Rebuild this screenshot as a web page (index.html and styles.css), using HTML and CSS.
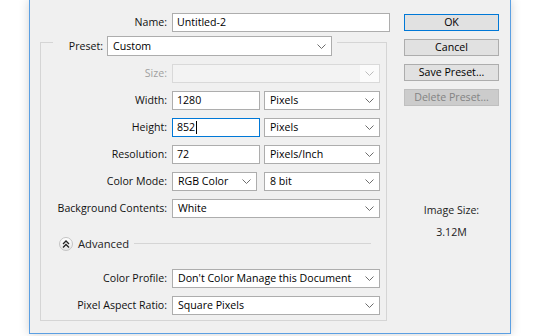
FILE: index.html
```html
<!DOCTYPE html>
<html lang="en">
<head>
    <meta charset="UTF-8">
    <title>New</title>
    <link rel="stylesheet" href="styles.css">
</head>
<body>

    <div class="window">
        <div class="main">
            <div class="name-row">
                <label class="label">Name:</label>
                <div class="input">Untitled-2</div>
            </div>

            <div class="group">
                <div class="group-head">
                    <label class="label preset-label">Preset:</label>
                    <div class="select preset-select">
                        <span>Custom</span>
                        <svg class="chev" width="9" height="5" viewBox="0 0 9 5"><polyline points="0.5,0.5 4.5,4.5 8.5,0.5"/></svg>
                    </div>
                </div>

                <div class="rows">
                    <label class="label disabled">Size:</label>
                    <div class="select is-disabled">
                        <span></span>
                        <svg class="chev" width="9" height="5" viewBox="0 0 9 5"><polyline points="0.5,0.5 4.5,4.5 8.5,0.5"/></svg>
                    </div>

                    <label class="label">Width:</label>
                    <div class="pair">
                        <div class="input num">1280</div>
                        <div class="select unit">
                            <span>Pixels</span>
                            <svg class="chev" width="9" height="5" viewBox="0 0 9 5"><polyline points="0.5,0.5 4.5,4.5 8.5,0.5"/></svg>
                        </div>
                    </div>

                    <label class="label">Height:</label>
                    <div class="pair">
                        <div class="input num focused">852<i class="caret"></i></div>
                        <div class="select unit">
                            <span>Pixels</span>
                            <svg class="chev" width="9" height="5" viewBox="0 0 9 5"><polyline points="0.5,0.5 4.5,4.5 8.5,0.5"/></svg>
                        </div>
                    </div>

                    <label class="label">Resolution:</label>
                    <div class="pair">
                        <div class="input num">72</div>
                        <div class="select unit">
                            <span>Pixels/Inch</span>
                            <svg class="chev" width="9" height="5" viewBox="0 0 9 5"><polyline points="0.5,0.5 4.5,4.5 8.5,0.5"/></svg>
                        </div>
                    </div>

                    <label class="label">Color Mode:</label>
                    <div class="pair">
                        <div class="select mode">
                            <span>RGB Color</span>
                            <svg class="chev" width="9" height="5" viewBox="0 0 9 5"><polyline points="0.5,0.5 4.5,4.5 8.5,0.5"/></svg>
                        </div>
                        <div class="select unit">
                            <span>8 bit</span>
                            <svg class="chev" width="9" height="5" viewBox="0 0 9 5"><polyline points="0.5,0.5 4.5,4.5 8.5,0.5"/></svg>
                        </div>
                    </div>

                    <label class="label">Background Contents:</label>
                    <div class="select">
                        <span>White</span>
                        <svg class="chev" width="9" height="5" viewBox="0 0 9 5"><polyline points="0.5,0.5 4.5,4.5 8.5,0.5"/></svg>
                    </div>

                    <div class="advanced">
                        <span class="adv-toggle">
                            <svg width="8" height="8" viewBox="0 0 8 8"><polyline points="1,4 4,1 7,4"/><polyline points="1,7.5 4,4.5 7,7.5"/></svg>
                        </span>
                        <span class="adv-text">Advanced</span>
                        <span class="adv-line"></span>
                    </div>

                    <label class="label">Color Profile:</label>
                    <div class="select">
                        <span>Don't Color Manage this Document</span>
                        <svg class="chev" width="9" height="5" viewBox="0 0 9 5"><polyline points="0.5,0.5 4.5,4.5 8.5,0.5"/></svg>
                    </div>

                    <label class="label">Pixel Aspect Ratio:</label>
                    <div class="select">
                        <span>Square Pixels</span>
                        <svg class="chev" width="9" height="5" viewBox="0 0 9 5"><polyline points="0.5,0.5 4.5,4.5 8.5,0.5"/></svg>
                    </div>
                </div>
            </div>
        </div>

        <div class="side">
            <button class="btn default">OK</button>
            <button class="btn">Cancel</button>
            <button class="btn">Save Preset...</button>
            <button class="btn" disabled>Delete Preset...</button>

            <div class="image-size">
                <p>Image Size:</p>
                <p>3.12M</p>
            </div>
        </div>
    </div>

</body>
</html>
```

FILE: styles.css
```css
body {
    margin: 0;
    padding: 0;
    height: 336px;
    overflow: hidden;
    background-color: #fff;
    font-family: 'Open Sans', 'Noto Sans', sans-serif;
    font-size: 10.6px;
    color: #000;
}

.window {
    display: flex;
    box-sizing: border-box;
    width: 482px;
    height: 334px;
    margin-left: 29px;
    padding-top: 13px;
    background-color: #f0f0f0;
    border: 1px solid #5b9fe2;
    border-top: none;
    box-shadow: 0 0 10px rgba(0, 0, 0, 0.18);
}

.main {
    width: 360px;
}

.label {
    text-align: right;
    line-height: 19px;
    white-space: nowrap;
    color: #111;
}

.label.disabled {
    color: #a0a0a0;
}

.name-row {
    display: grid;
    grid-template-columns: 137px 218px;
    column-gap: 5px;
}

.input,
.select {
    box-sizing: border-box;
    height: 19px;
    line-height: 17px;
    background-color: #fff;
    border: 1px solid #adadad;
    white-space: nowrap;
}

.input {
    padding-left: 4px;
}

.input.focused {
    border-color: #0078d7;
}

.caret {
    display: inline-block;
    width: 1px;
    height: 13px;
    margin-left: 1px;
    vertical-align: -3px;
    background-color: #000;
}

.select {
    display: flex;
    align-items: center;
    justify-content: space-between;
    padding: 0 5px 0 5px;
}

.chev {
    flex: none;
    fill: none;
    stroke: #6d6d6d;
    stroke-width: 1;
}

.select.is-disabled {
    background-color: #f3f3f3;
    border-color: #d9d9d9;
    padding-right: 0;
}

.select.is-disabled .chev {
    box-sizing: content-box;
    padding: 6px 5px;
    background-color: #fbfbfb;
    stroke: #bcbcbc;
}

/* group box */

.group {
    box-sizing: border-box;
    width: 347px;
    height: 279px;
    margin: 10px 0 0 10px;
    border: 1px solid #d5d5d5;
}

.group-head {
    display: flex;
    align-items: center;
    width: fit-content;
    margin: -7px 0 0 12px;
    padding: 0 5px 0 15px;
    background-color: #f0f0f0;
}

.preset-label {
    width: 35px;
    margin-right: 4px;
}

.preset-select {
    width: 225px;
    height: 20px;
}

.rows {
    display: grid;
    grid-template-columns: 126px 208px;
    column-gap: 5px;
    row-gap: 8px;
    margin-top: 8px;
}

.pair {
    display: flex;
    justify-content: space-between;
}

.num {
    width: 88px;
}

.mode {
    width: 85px;
}

.unit {
    width: 116px;
}

.advanced {
    grid-column: 1 / 3;
    display: flex;
    align-items: center;
    height: 15px;
    margin: 10px 9px 10px 0;
    padding-left: 18px;
}

.adv-toggle {
    display: flex;
    align-items: center;
    justify-content: center;
    box-sizing: border-box;
    width: 14px;
    height: 14px;
    border: 1px solid #c4c4c4;
    border-radius: 50%;
    background: linear-gradient(#ffffff, #e6e6e6);
}

.adv-toggle svg {
    fill: none;
    stroke: #222;
    stroke-width: 1.3;
}

.adv-text {
    margin: 0 5px;
    font-size: 11.2px;
    color: #222;
}

.adv-line {
    flex: 1;
    height: 1px;
    background-color: #d5d5d5;
}

/* buttons column */

.side {
    width: 95px;
    margin-left: 14px;
    padding-top: 1px;
}

.btn {
    display: block;
    box-sizing: border-box;
    width: 95px;
    height: 17px;
    margin-bottom: 8px;
    padding: 0;
    font-family: inherit;
    font-size: 10.6px;
    line-height: 15px;
    color: #000;
    background-color: #e1e1e1;
    border: 1px solid #adadad;
}

.btn.default {
    border-color: #0078d7;
}

.btn:disabled {
    color: #838383;
    background-color: #cccccc;
    border-color: #bfbfbf;
}

.image-size {
    margin-top: 97px;
    text-align: center;
    color: #222;
}

.image-size p {
    margin: 0 0 7px;
    line-height: 15px;
}
```
